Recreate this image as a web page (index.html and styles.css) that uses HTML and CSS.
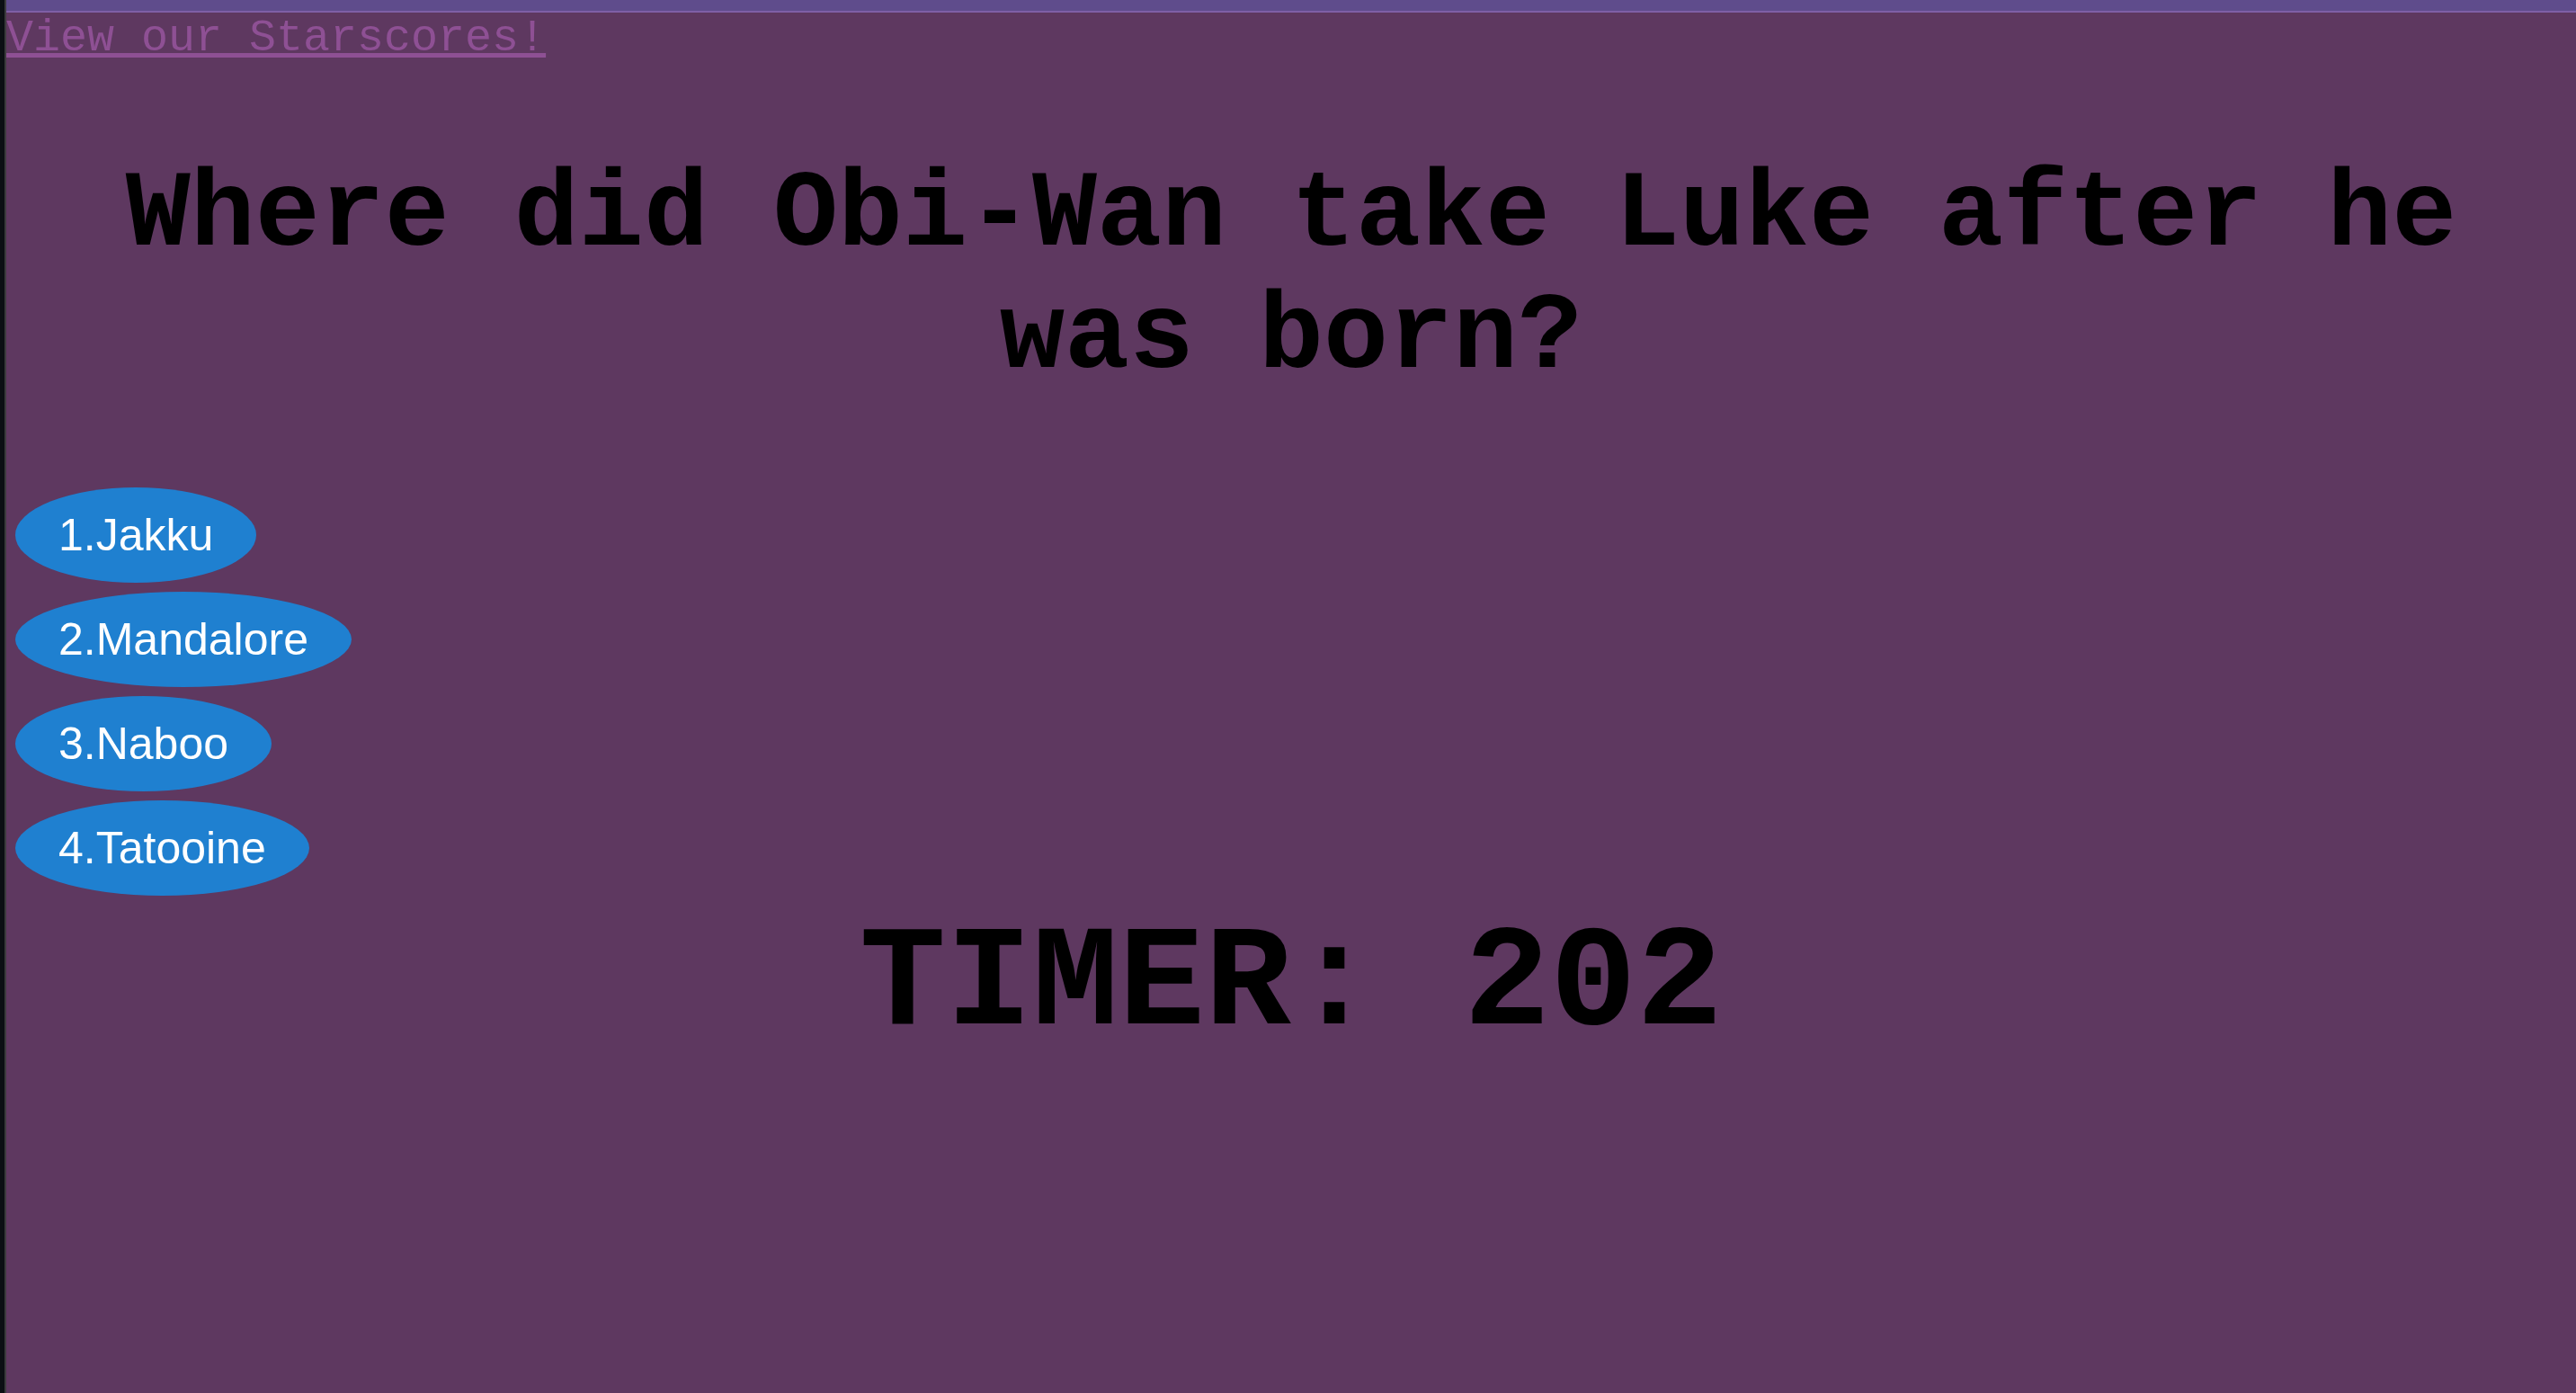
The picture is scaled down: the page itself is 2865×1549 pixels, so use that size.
FILE: index.html
```html
<!DOCTYPE html>
<html lang="en">
<head>
<meta charset="utf-8">
<title>Star Wars Quiz</title>
<link rel="stylesheet" href="styles.css">
</head>
<body>
<div class="frame">
  <div class="edge"></div>
  <div class="page">
    <div class="topbar"></div>
    <header class="header">
      <a href="#" class="scores-link">View our Starscores!</a>
    </header>
    <main class="quiz">
      <h1 class="question">Where did Obi-Wan take Luke after he was born?</h1>
      <div class="choices">
        <button class="choice">1.Jakku</button>
        <button class="choice">2.Mandalore</button>
        <button class="choice">3.Naboo</button>
        <button class="choice">4.Tatooine</button>
      </div>
      <div class="timer">TIMER: 202</div>
    </main>
  </div>
</div>
</body>
</html>
```
FILE: styles.css
```css
html, body {
  margin: 0;
  padding: 0;
  height: 100%;
}

body {
  background: #5e3860;
  color: #000;
  font-family: "Liberation Mono", "Courier New", monospace;
  overflow: hidden;
}

.frame {
  display: flex;
  min-height: 100vh;
}

.edge {
  flex: 0 0 5px;
  background: #0b0f13;
  border-right: 2px solid #3b3b3d;
}

.page {
  flex: 1;
  display: flex;
  flex-direction: column;
  min-width: 0;
}

.topbar {
  height: 12px;
  background: #5f4c8c;
  border-bottom: 2px solid #7f5fa6;
}

.header {
  font-size: 50px;
  line-height: 57px;
}

.scores-link {
  color: #8e5094;
  text-decoration: underline;
  text-decoration-thickness: 5px;
  text-underline-offset: 3px;
}

.quiz {
  display: flex;
  flex-direction: column;
}

.question {
  margin: 101px 0 0;
  font-size: 120px;
  line-height: 136px;
  font-weight: bold;
  text-align: center;
}

.choices {
  margin-top: 98px;
  padding-left: 10px;
  display: flex;
  flex-direction: column;
  align-items: flex-start;
  gap: 10px;
}

.choice {
  font-family: "Liberation Sans", Arial, sans-serif;
  font-size: 50px;
  line-height: 58px;
  padding: 24px 48px;
  border: none;
  border-radius: 50%;
  background: #1f80d0;
  color: #fff;
  cursor: pointer;
}

.timer {
  margin-top: 9px;
  font-size: 160px;
  font-weight: bold;
  text-align: center;
}
```
